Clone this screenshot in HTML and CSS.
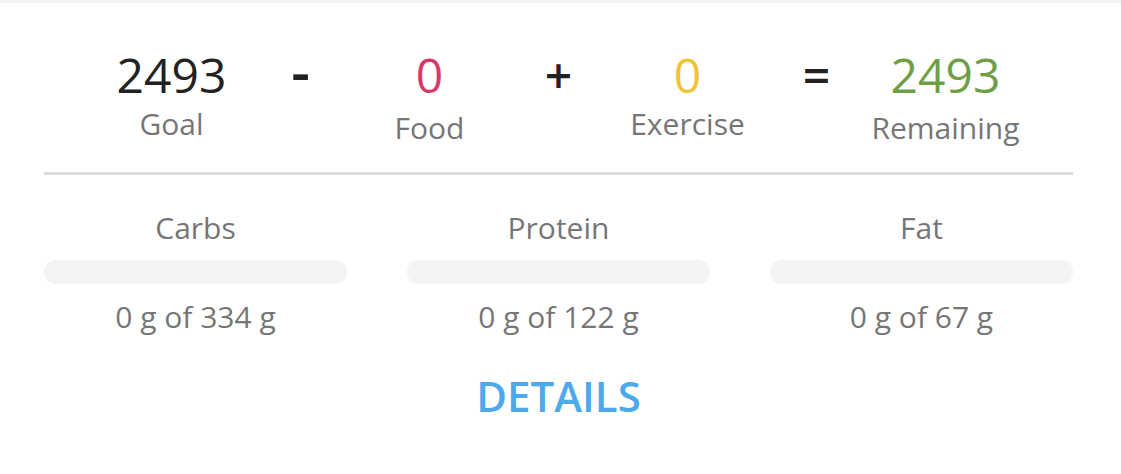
FILE: index.html
```html
<!DOCTYPE html>
<html lang="en">
<head>
<meta charset="utf-8">
<title>Calories Remaining</title>
<link rel="stylesheet" href="styles.css">
</head>
<body>
<div class="topbar"></div>
<main class="card">
  <section class="equation">
    <div class="term">
      <div class="num num-goal">2493</div>
      <div class="label">Goal</div>
    </div>
    <div class="op op-minus">-</div>
    <div class="term">
      <div class="num num-food">0</div>
      <div class="label label-low">Food</div>
    </div>
    <div class="op">+</div>
    <div class="term">
      <div class="num num-exercise">0</div>
      <div class="label">Exercise</div>
    </div>
    <div class="op">=</div>
    <div class="term">
      <div class="num num-remaining">2493</div>
      <div class="label label-low">Remaining</div>
    </div>
  </section>
  <section class="macros">
    <div class="macro">
      <div class="label">Carbs</div>
      <div class="bar"><div class="bar-fill" style="width:0%"></div></div>
      <div class="amount">0 g of 334 g</div>
    </div>
    <div class="macro">
      <div class="label">Protein</div>
      <div class="bar"><div class="bar-fill" style="width:0%"></div></div>
      <div class="amount">0 g of 122 g</div>
    </div>
    <div class="macro">
      <div class="label">Fat</div>
      <div class="bar"><div class="bar-fill" style="width:0%"></div></div>
      <div class="amount">0 g of 67 g</div>
    </div>
  </section>
  <div class="details-row">
    <a class="details" href="#">DETAILS</a>
  </div>
</main>
</body>
</html>
```
FILE: styles.css
```css
* { box-sizing: border-box; }

html, body {
  margin: 0;
  padding: 0;
  background: #ffffff;
}

body {
  font-family: "Open Sans", "Noto Sans", sans-serif;
  color: #222222;
}

.topbar {
  height: 3px;
  background: #f3f3f3;
}

.card {
  padding: 0 48px 0 44px;
}

.equation {
  display: grid;
  grid-template-columns: repeat(7, 129px);
  justify-content: center;
  align-items: baseline;
  padding-top: 40px;
  padding-bottom: 26px;
  border-bottom: 3px solid #dddddd;
}

.term {
  display: flex;
  flex-direction: column;
  align-items: center;
  white-space: nowrap;
}

.num {
  font-size: 48px;
  line-height: 56px;
  font-weight: 400;
  color: #222222;
}

.num-food { color: #d8396a; }
.num-exercise { color: #f4c238; }
.num-remaining { color: #6f9f45; }

.op {
  text-align: center;
  font-size: 48px;
  line-height: 56px;
  font-weight: 600;
  color: #222222;
}

.op-minus {
  font-size: 58px;
}

.label {
  font-size: 30px;
  line-height: 36px;
  color: #767676;
  margin-top: 3px;
}

.label-low {
  margin-top: 7px;
}

.macros {
  display: grid;
  grid-template-columns: repeat(3, 1fr);
  column-gap: 60px;
  padding-top: 35px;
}

.macro {
  text-align: center;
}

.macro .label {
  margin-top: 0;
}

.bar {
  height: 24px;
  border-radius: 12px;
  background: #f3f3f3;
  margin-top: 14px;
  overflow: hidden;
}

.bar-fill {
  height: 100%;
  background: #4ba9ec;
}

.amount {
  font-size: 30px;
  line-height: 36px;
  color: #767676;
  margin-top: 15px;
}

.details-row {
  text-align: center;
  margin-top: 36px;
}

.details {
  font-size: 42px;
  line-height: 50px;
  font-weight: 600;
  color: #4ba9ec;
  text-decoration: none;
}
```
